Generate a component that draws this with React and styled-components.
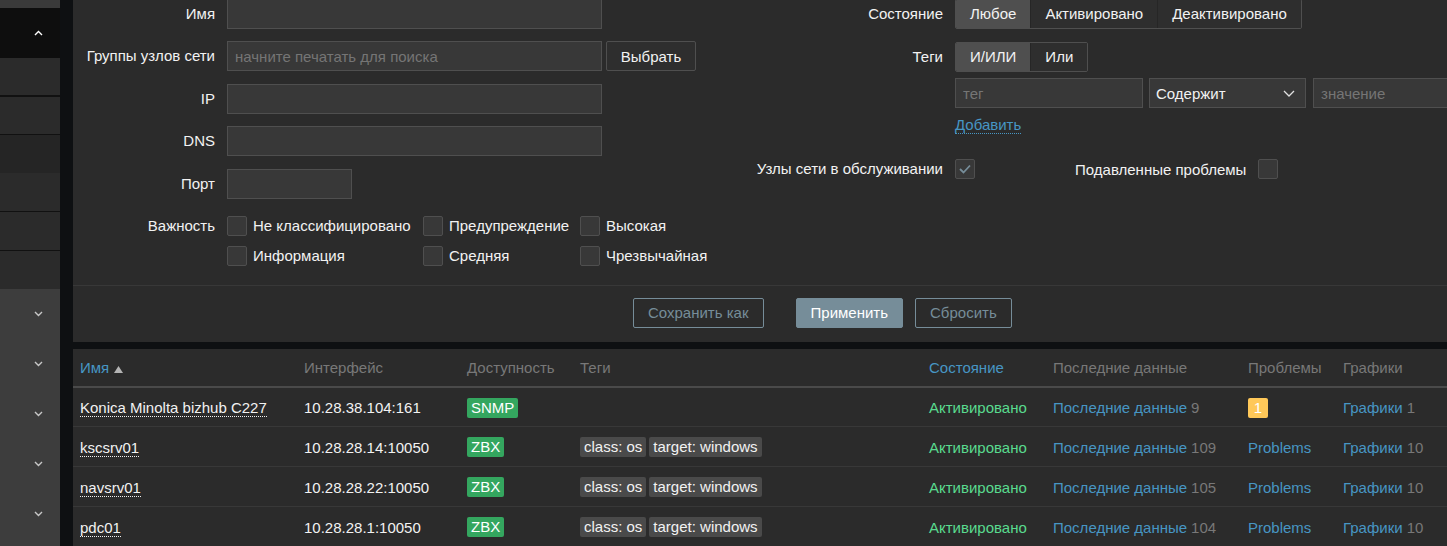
import styled, { createGlobalStyle } from "styled-components";

const GlobalStyle = createGlobalStyle`
    html, body {
        margin: 0;
        padding: 0;
        background: #0e1012;
        overflow: hidden;
    }
    body {
        font-family: "Liberation Sans", Arial, sans-serif;
        font-size: 15px;
        color: #f2f2f2;
    }
    * {
        box-sizing: border-box;
    }
`;

const menu = [
    { h: 8, bg: "#3a3a3a" },
    { h: 50, bg: "#0e0e0e", icon: "up" },
    { h: 37, bg: "#2b2b2b", sep: 2 },
    { h: 37, bg: "#2b2b2b", sep: 1 },
    { h: 38, bg: "#252525" },
    { h: 38, bg: "#2b2b2b", sep: 1 },
    { h: 38, bg: "#2b2b2b", sep: 1 },
    { h: 38, bg: "#2b2b2b" },
    { h: 50, bg: "#3d3d3d", icon: "down" },
    { h: 50, bg: "#3d3d3d", icon: "down" },
    { h: 50, bg: "#3d3d3d", icon: "down" },
    { h: 50, bg: "#3d3d3d", icon: "down" },
    { h: 50, bg: "#3d3d3d", icon: "down" },
];

const hosts = [
    { name: "Konica Minolta bizhub C227", iface: "10.28.38.104:161", avail: "SNMP", tags: [], latest: 9, problems: 1, graphs: 1 },
    { name: "kscsrv01", iface: "10.28.28.14:10050", avail: "ZBX", tags: ["class: os", "target: windows"], latest: 109, graphs: 10 },
    { name: "navsrv01", iface: "10.28.28.22:10050", avail: "ZBX", tags: ["class: os", "target: windows"], latest: 105, graphs: 10 },
    { name: "pdc01", iface: "10.28.28.1:10050", avail: "ZBX", tags: ["class: os", "target: windows"], latest: 104, graphs: 10 },
];

const severities = [
    "Не классифицировано", "Предупреждение", "Высокая",
    "Информация", "Средняя", "Чрезвычайная",
];

function Chevron({ dir }) {
    const up = dir === "up";
    return (
        <svg width="9" height="6" viewBox="0 0 9 6">
            <polyline
                points={up ? "1,5 4.5,1.5 8,5" : "1,1 4.5,4.5 8,1"}
                fill="none"
                stroke={up ? "#ffffff" : "#c8c8c8"}
                strokeWidth="1.4"
            />
        </svg>
    );
}

function Checkbox({ checked }) {
    return (
        <Box>
            {checked && (
                <svg width="12" height="10" viewBox="0 0 12 10">
                    <polyline points="1,5 4.5,8.5 11,1.5" fill="none" stroke="#768d99" strokeWidth="1.8" />
                </svg>
            )}
        </Box>
    );
}

export default function App() {
    return (
        <Layout>
            <GlobalStyle />
            <Sidebar>
                {menu.map((m, i) => (
                    <MenuItem key={i} $h={m.h} $bg={m.bg} $sep={m.sep}>
                        {m.icon && <Chevron dir={m.icon} />}
                    </MenuItem>
                ))}
            </Sidebar>

            <Main>
                <FilterPanel>
                    <FormGrid>
                        <LeftColumn>
                            <FormRow $label={142}>
                                <Label>Имя</Label>
                                <Input $w={375} />
                            </FormRow>
                            <FormRow $label={142}>
                                <Label>Группы узлов сети</Label>
                                <Controls>
                                    <Input $w={375} placeholder="начните печатать для поиска" />
                                    <SelectButton>Выбрать</SelectButton>
                                </Controls>
                            </FormRow>
                            <FormRow $label={142}>
                                <Label>IP</Label>
                                <Input $w={375} />
                            </FormRow>
                            <FormRow $label={142}>
                                <Label>DNS</Label>
                                <Input $w={375} />
                            </FormRow>
                            <FormRow $label={142}>
                                <Label>Порт</Label>
                                <Input $w={125} />
                            </FormRow>
                            <FormRow $label={142} $top>
                                <Label>Важность</Label>
                                <SeverityGrid>
                                    {severities.map((s) => (
                                        <CheckItem key={s}>
                                            <Checkbox />
                                            <span>{s}</span>
                                        </CheckItem>
                                    ))}
                                </SeverityGrid>
                            </FormRow>
                        </LeftColumn>

                        <RightColumn>
                            <FormRow $label={203}>
                                <Label>Состояние</Label>
                                <Segmented>
                                    <Segment $active>Любое</Segment>
                                    <Segment>Активировано</Segment>
                                    <Segment>Деактивировано</Segment>
                                </Segmented>
                            </FormRow>
                            <FormRow $label={203} $mt={13}>
                                <Label>Теги</Label>
                                <Segmented>
                                    <Segment $active>И/ИЛИ</Segment>
                                    <Segment>Или</Segment>
                                </Segmented>
                            </FormRow>
                            <FormRow $label={203} $mt={6}>
                                <span />
                                <TagFilter>
                                    <Input $w={188} placeholder="тег" />
                                    <Select>
                                        <span>Содержит</span>
                                        <svg width="12" height="7" viewBox="0 0 12 7">
                                            <polyline points="1,1 6,6 11,1" fill="none" stroke="#e0e0e0" strokeWidth="1.3" />
                                        </svg>
                                    </Select>
                                    <Input $w={188} placeholder="значение" />
                                </TagFilter>
                            </FormRow>
                            <FormRow $label={203} $mt={8}>
                                <span />
                                <div>
                                    <DottedLink>Добавить</DottedLink>
                                </div>
                            </FormRow>
                            <FormRow $label={203} $mt={20}>
                                <Label>Узлы сети в обслуживании</Label>
                                <Controls>
                                    <Checkbox checked />
                                    <InlineLabel>Подавленные проблемы</InlineLabel>
                                    <Checkbox />
                                </Controls>
                            </FormRow>
                        </RightColumn>
                    </FormGrid>

                    <FilterFooter>
                        <Button $variant="outline">Сохранить как</Button>
                        <Button $variant="primary">Применить</Button>
                        <Button $variant="outline">Сбросить</Button>
                    </FilterFooter>
                </FilterPanel>

                <Table>
                    <colgroup>
                        <col style={{ width: 224 }} />
                        <col style={{ width: 163 }} />
                        <col style={{ width: 113 }} />
                        <col style={{ width: 349 }} />
                        <col style={{ width: 124 }} />
                        <col style={{ width: 195 }} />
                        <col style={{ width: 95 }} />
                        <col />
                    </colgroup>
                    <thead>
                        <tr>
                            <Th $link>
                                Имя
                                <SortArrow width="9" height="7" viewBox="0 0 9 7">
                                    <polygon points="0,7 4.5,0 9,7" fill="#b4b4b4" />
                                </SortArrow>
                            </Th>
                            <Th>Интерфейс</Th>
                            <Th>Доступность</Th>
                            <Th>Теги</Th>
                            <Th $link>Состояние</Th>
                            <Th>Последние данные</Th>
                            <Th>Проблемы</Th>
                            <Th>Графики</Th>
                        </tr>
                    </thead>
                    <tbody>
                        {hosts.map((h) => (
                            <tr key={h.name}>
                                <Td><HostName>{h.name}</HostName></Td>
                                <Td>{h.iface}</Td>
                                <Td><Availability>{h.avail}</Availability></Td>
                                <Td>
                                    {h.tags.map((t) => (
                                        <Tag key={t}>{t}</Tag>
                                    ))}
                                </Td>
                                <Td><Status>Активировано</Status></Td>
                                <Td>
                                    <Link>Последние данные</Link>
                                    <Count>{h.latest}</Count>
                                </Td>
                                <Td>
                                    {h.problems ? (
                                        <ProblemBadge>{h.problems}</ProblemBadge>
                                    ) : (
                                        <Link>Problems</Link>
                                    )}
                                </Td>
                                <Td>
                                    <Link>Графики</Link>
                                    <Count>{h.graphs}</Count>
                                </Td>
                            </tr>
                        ))}
                    </tbody>
                </Table>
            </Main>
        </Layout>
    );
}

const Layout = styled.div`
    display: flex;
    width: 1447px;
    min-height: 100vh;
`;

const Sidebar = styled.nav`
    width: 60px;
    flex-shrink: 0;
    display: flex;
    flex-direction: column;
    background: #3d3d3d;
`;

const MenuItem = styled.div`
    height: ${(p) => p.$h + (p.$sep || 0)}px;
    flex-shrink: 0;
    background: ${(p) => p.$bg};
    border-bottom: ${(p) => (p.$sep ? `${p.$sep}px solid #111111` : "none")};
    display: flex;
    align-items: center;
    justify-content: flex-end;
    padding-right: 17px;
`;

const Main = styled.main`
    flex: 1;
    min-width: 0;
    margin-left: 13px;
    display: flex;
    flex-direction: column;
    gap: 7px;
`;

const FilterPanel = styled.section`
    background: #2b2b2b;
`;

const FormGrid = styled.div`
    display: grid;
    grid-template-columns: 667px 1fr;
    align-items: start;
    margin-top: -1px;
`;

const LeftColumn = styled.div`
    display: flex;
    flex-direction: column;
    gap: 12.4px;
`;

const RightColumn = styled.div`
    display: flex;
    flex-direction: column;
`;

const FormRow = styled.div`
    display: grid;
    grid-template-columns: ${(p) => p.$label}px 1fr;
    column-gap: 12px;
    align-items: ${(p) => (p.$top ? "start" : "center")};
    margin-top: ${(p) => p.$mt || 0}px;
`;

const Label = styled.label`
    text-align: right;
    line-height: 30px;
    white-space: nowrap;
`;

const Controls = styled.div`
    display: flex;
    align-items: center;
    gap: 4px;
`;

const Input = styled.input`
    width: ${(p) => p.$w}px;
    height: 30px;
    flex-shrink: 0;
    background: #383838;
    border: 1px solid #4f4f4f;
    border-radius: 0;
    color: #f2f2f2;
    padding: 0 7px;
    font: inherit;
    outline: none;

    ::placeholder {
        color: #7d7d7d;
    }
`;

const SelectButton = styled.button`
    width: 90px;
    height: 30px;
    background: #2e2e2e;
    border: 1px solid #4f4f4f;
    border-radius: 2px;
    color: #f2f2f2;
    font: inherit;
`;

const SeverityGrid = styled.div`
    display: grid;
    grid-template-columns: 196px 157px auto;
    grid-auto-rows: 30px;
    align-items: center;
`;

const CheckItem = styled.div`
    display: flex;
    align-items: center;
    gap: 6px;
    white-space: nowrap;
`;

const Box = styled.span`
    width: 20px;
    height: 20px;
    flex-shrink: 0;
    display: inline-flex;
    align-items: center;
    justify-content: center;
    background: #383838;
    border: 1px solid #4f4f4f;
    border-radius: 2px;
`;

const InlineLabel = styled.span`
    margin-left: 96px;
    margin-right: 8px;
    white-space: nowrap;
`;

const Segmented = styled.div`
    display: inline-flex;
    justify-self: start;
    height: 30px;
    border: 1px solid #4f4f4f;
    border-radius: 2px;
    overflow: hidden;
`;

const Segment = styled.span`
    padding: 0 14px;
    line-height: 28px;
    white-space: nowrap;
    background: ${(p) => (p.$active ? "#4f4f4f" : "#2e2e2e")};

    & + & {
        border-left: 1px solid #262626;
    }
`;

const TagFilter = styled.div`
    display: flex;
    gap: 6px;
`;

const Select = styled.div`
    width: 157px;
    height: 30px;
    flex-shrink: 0;
    display: flex;
    align-items: center;
    justify-content: space-between;
    padding: 0 10px 0 6px;
    background: #383838;
    border: 1px solid #4f4f4f;
    margin-right: 1px;
`;

const DottedLink = styled.a`
    color: #4796c4;
    line-height: 18px;
    border-bottom: 1px dotted #4796c4;
`;

const FilterFooter = styled.div`
    display: flex;
    gap: 12px;
    margin-top: 14px;
    padding: 12px 0 14px 560px;
    border-top: 1px solid #383838;

    & > :first-child {
        margin-right: 20px;
    }
`;

const Button = styled.button`
    height: 30px;
    padding: 0 14px;
    border-radius: 2px;
    font: inherit;
    border: 1px solid #768d99;
    background: ${(p) => (p.$variant === "primary" ? "#768d99" : "transparent")};
    color: ${(p) => (p.$variant === "primary" ? "#ffffff" : "#768d99")};
`;

const Table = styled.table`
    width: 100%;
    border-collapse: collapse;
    table-layout: fixed;
    background: #2b2b2b;
`;

const Th = styled.th`
    height: 38px;
    padding: 0 7px;
    text-align: left;
    font-weight: normal;
    white-space: nowrap;
    color: ${(p) => (p.$link ? "#4796c4" : "#787878")};
    border-bottom: 2px solid #4a4a4a;
`;

const SortArrow = styled.svg`
    margin-left: 5px;
    vertical-align: 0;
`;

const Td = styled.td`
    height: 40px;
    padding: 1px 7px 0;
    white-space: nowrap;
    border-bottom: 1px solid #383838;
`;

const HostName = styled.a`
    color: #f2f2f2;
    border-bottom: 1px dotted #f2f2f2;
`;

const Availability = styled.span`
    display: inline-block;
    padding: 0 4px;
    line-height: 20px;
    border-radius: 2px;
    background: #34a65f;
    color: #ffffff;
`;

const Tag = styled.span`
    display: inline-block;
    padding: 0 4px;
    margin-right: 3px;
    line-height: 20px;
    border-radius: 2px;
    background: #4a4a4a;
    color: #f2f2f2;
`;

const Status = styled.span`
    color: #59db8f;
`;

const Link = styled.a`
    color: #4796c4;
`;

const Count = styled.span`
    color: #787878;
    margin-left: 4px;
`;

const ProblemBadge = styled.span`
    display: inline-block;
    width: 20px;
    line-height: 20px;
    text-align: center;
    border-radius: 2px;
    background: #ffc859;
    color: #ffffff;
`;
